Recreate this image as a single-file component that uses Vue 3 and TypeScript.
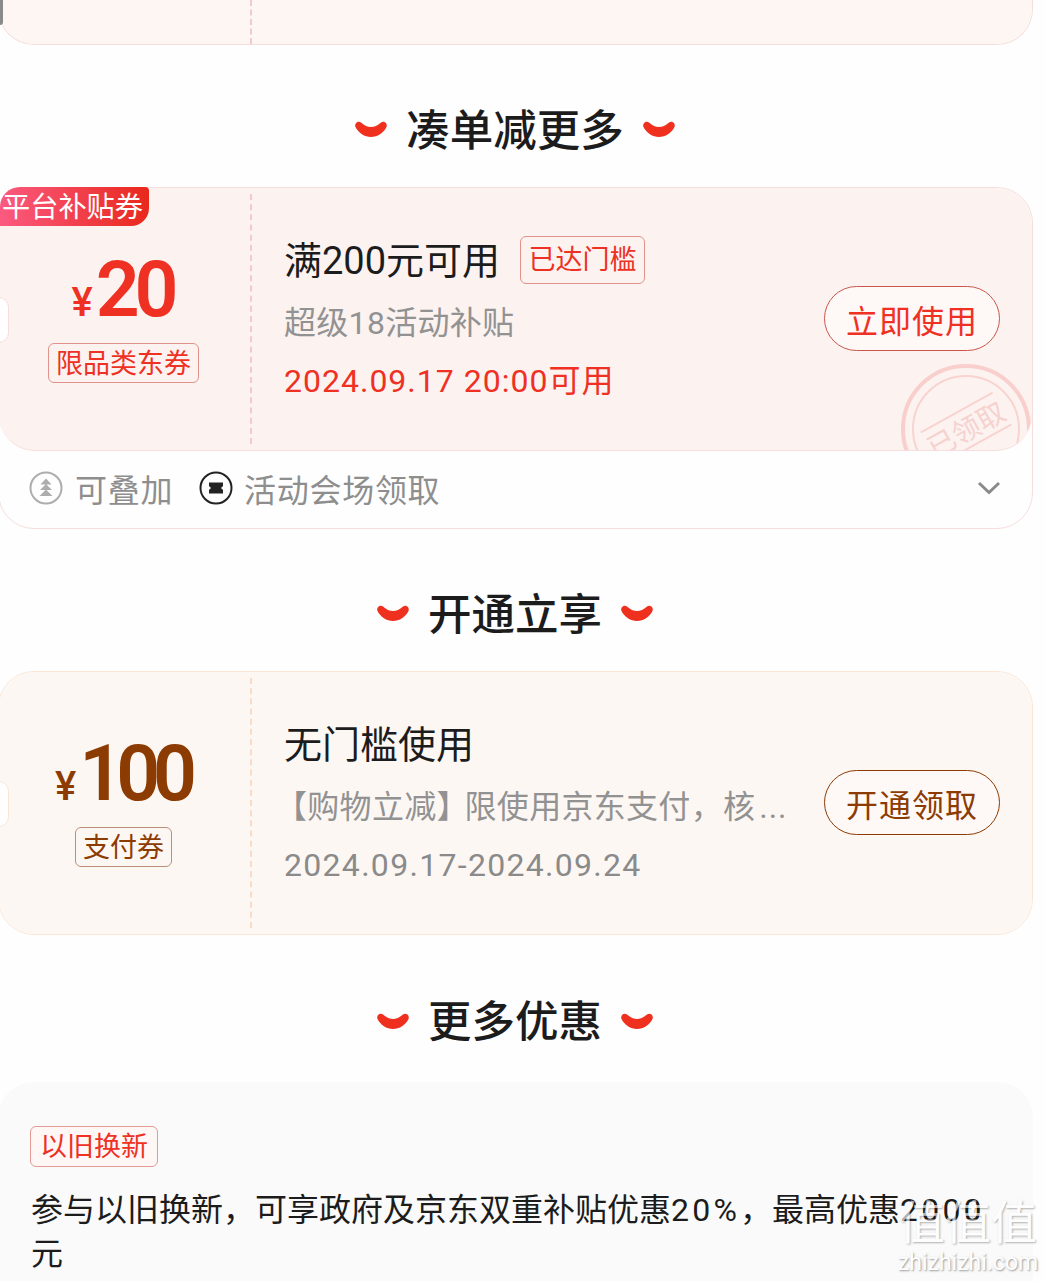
<script setup lang="ts">
/**
 * Coupon list page: grouped tickets with section headings
 */
const smilePath =
	"M1 7C-.5 3.5 3.5 0 6.5 2.5 10 5.5 13 7 16.5 7 20 7 23 5.5 26.5 2.5 29.5 0 33.5 3.5 32 7 29 13 23 17 16.5 17 10 17 4 13 1 7Z";
</script>

<template>
	<div class="page">
		<div class="card top-card">
			<div class="ticket ticket-red top-ticket">
				<div class="ticket-left"></div>
				<div class="divider"></div>
			</div>
		</div>

		<h2 class="heading">
			<svg class="smile" viewBox="0 0 33 18"><path :d="smilePath" /></svg>
			<span>凑单减更多</span>
			<svg class="smile" viewBox="0 0 33 18"><path :d="smilePath" /></svg>
		</h2>

		<div class="card">
			<div class="ticket ticket-red ticket-lined">
				<div class="stamp-clip">
					<svg class="stamp" viewBox="0 0 130 130">
						<circle cx="65" cy="65" r="63" class="ring-outer" />
						<circle cx="65" cy="65" r="53" class="ring-inner" />
						<g transform="rotate(-29 65 65)">
							<line x1="24" y1="46" x2="106" y2="46" class="ring-inner" />
							<line x1="20" y1="83" x2="107" y2="83" class="ring-inner" />
							<text x="65" y="76" text-anchor="middle" class="stamp-text">已领取</text>
						</g>
					</svg>
				</div>
				<div class="badge">平台补贴券</div>
				<div class="notch"></div>
				<div class="ticket-left">
					<div class="amount">
						<span class="yen">¥</span><span class="num">20</span>
					</div>
					<span class="kind">限品类东券</span>
				</div>
				<div class="divider"></div>
				<div class="info">
					<div class="info-row title">
						满200元可用
						<span class="reached">已达门槛</span>
					</div>
					<div class="info-row desc">超级18活动补贴</div>
					<div class="info-row date date-red">2024.09.17 20:00可用</div>
				</div>
				<button class="action" type="button">立即使用</button>
			</div>
			<div class="card-foot">
				<svg class="foot-icon" viewBox="0 0 34 34">
					<circle cx="17" cy="17" r="15.5" fill="none" stroke="#adadad" stroke-width="2" />
					<path d="M17 7.5l5.5 6h-11zM17 13l6 6H11zM17 18.5l6.5 6.5h-13z" fill="#adadad" />
				</svg>
				<span class="foot-text">可叠加</span>
				<svg class="foot-icon foot-icon-second" viewBox="0 0 34 34">
					<circle cx="17" cy="17" r="15.5" fill="none" stroke="#222" stroke-width="2" />
					<path d="M10 11.5h14v3.5l-2 2 2 2v3.5H10V19l2-2-2-2z" fill="#222" />
				</svg>
				<span class="foot-text">活动会场领取</span>
				<svg class="chevron" viewBox="0 0 24 14">
					<path d="M2 2l10 9.5L22 2" fill="none" stroke="#8a8a8a" stroke-width="3" />
				</svg>
			</div>
		</div>

		<h2 class="heading">
			<svg class="smile" viewBox="0 0 33 18"><path :d="smilePath" /></svg>
			<span>开通立享</span>
			<svg class="smile" viewBox="0 0 33 18"><path :d="smilePath" /></svg>
		</h2>

		<div class="card card-brown">
			<div class="ticket ticket-brown">
				<div class="notch"></div>
				<div class="ticket-left">
					<div class="amount">
						<span class="yen">¥</span><span class="num num-long">100</span>
					</div>
					<span class="kind">支付券</span>
				</div>
				<div class="divider"></div>
				<div class="info">
					<div class="info-row title">无门槛使用</div>
					<div class="info-row desc desc-cut"><span class="open-br">【</span>购物立减<span class="close-br">】</span>限使用京东支付，核<span class="dots">...</span></div>
					<div class="info-row date date-gray">2024.09.17-2024.09.24</div>
				</div>
				<button class="action" type="button">开通领取</button>
			</div>
		</div>

		<h2 class="heading heading-last">
			<svg class="smile" viewBox="0 0 33 18"><path :d="smilePath" /></svg>
			<span>更多优惠</span>
			<svg class="smile" viewBox="0 0 33 18"><path :d="smilePath" /></svg>
		</h2>

		<div class="more">
			<span class="more-tag">以旧换新</span>
			<p class="more-text">参与以旧换新，可享政府及京东双重补贴优惠<span class="digits">20%</span>，最高优惠<span class="digits">2000</span>元</p>
		</div>

		<div class="scroll-mark"></div>

		<div class="watermark">
			<div class="wm-logo">值值值</div>
			<div class="wm-url">zhizhizhi.com</div>
		</div>
	</div>
</template>

<style scoped>
.page {
	position: relative;
	width: 1046px;
	height: 1281px;
	overflow: hidden;
	background: #fefefe;
	color: #1c1c1c;
	font-family: Roboto, "Noto Sans CJK SC", sans-serif;
}

.scroll-mark {
	position: absolute;
	left: 0;
	top: 0;
	width: 3px;
	height: 25px;
	background: #8a8a8a;
	border-radius: 0 0 3px 0;
}

.card {
	width: 1035px;
	margin-left: -2px;
	box-sizing: border-box;
	background: #fefefe;
	border: 1px solid #f5dedb;
	border-radius: 36px;
}

.top-card {
	border-top: none;
	border-radius: 0 0 36px 36px;
}

.card-brown {
	border-color: #fbe6d6;
}

.ticket {
	position: relative;
	display: flex;
	height: 263px;
	box-sizing: border-box;
	border-radius: 36px;
}

.ticket-red {
	background: #fcf3f1;
	--accent: #ee3123;
	--accent-line: #c9574c;
	--tag-line: #e0938b;
	--dash: #f3c9cb;
}

.ticket-brown {
	background: #fdf7f3;
	--accent: #8c3c03;
	--accent-line: #8c3c03;
	--tag-line: #b9917a;
	--dash: #f8dcc8;
	height: 262px;
}

.top-ticket {
	height: 44px;
	background: #fdf6f3;
	border-radius: 0 0 36px 36px;
}

.top-ticket .divider {
	margin: 0;
}

.ticket-lined {
	border-bottom: 1px solid #f5dedb;
}

.heading {
	display: flex;
	align-items: center;
	justify-content: center;
	gap: 18px;
	box-sizing: border-box;
	height: 142px;
	margin: 0;
	padding: 22px 16px 0 0;
	font-size: 43.5px;
	font-weight: 500;
	color: #1c1c1c;
}

.heading-last {
	height: 147px;
	padding-bottom: 2px;
}

.smile {
	width: 34px;
	height: 18px;
	margin-top: 4px;
	fill: #f0301f;
}

.badge {
	position: absolute;
	left: 1px;
	top: -1px;
	width: 149px;
	height: 39px;
	box-sizing: border-box;
	padding-left: 2px;
	border-radius: 20px 4px 18px 0;
	background: linear-gradient(90deg, #fb5a80, #e9281c);
	color: #fff;
	font-size: 28.2px;
	line-height: 42px;
	white-space: nowrap;
}

.notch {
	position: absolute;
	left: -2px;
	top: 109px;
	width: 12px;
	height: 46px;
	box-sizing: border-box;
	background: #fefefe;
	border: 1px solid #f5dedb;
	border-radius: 0 10px 10px 0;
}

.ticket-brown .notch {
	border-color: #fbe6d6;
}

.ticket-left {
	display: flex;
	flex-direction: column;
	align-items: center;
	flex: none;
	width: 251px;
	padding: 60px 2px 0 0;
	box-sizing: border-box;
}

.amount {
	display: flex;
	align-items: baseline;
	height: 84px;
	margin: 0 0 11px -2px;
	line-height: 84px;
	color: var(--accent);
}

.yen {
	font-size: 40px;
	font-weight: 500;
	margin-right: 3px;
}

.num {
	font-size: 77px;
	font-weight: 600;
	letter-spacing: -5px;
}

.num-long {
	letter-spacing: -7px;
}

.kind {
	display: block;
	height: 40px;
	box-sizing: border-box;
	padding: 0 7px;
	border: 1px solid var(--tag-line);
	border-radius: 6px;
	color: var(--accent);
	font-size: 27px;
	line-height: 40px;
	white-space: nowrap;
}

.divider {
	flex: none;
	margin: 6px 0;
	border-left: 2px dashed var(--dash);
}

.info {
	flex: 1;
	min-width: 0;
	padding: 43px 0 0 32px;
}

.info-row {
	display: flex;
	align-items: center;
	height: 60px;
	font-size: 32px;
	line-height: 60px;
	white-space: nowrap;
}

.title {
	font-size: 38px;
	color: #1c1c1c;
}

.reached {
	margin: -2px 0 0 20px;
	height: 48px;
	box-sizing: border-box;
	padding: 0 7.5px;
	border: 1px solid var(--tag-line);
	border-radius: 6px;
	color: var(--accent);
	font-size: 27px;
	line-height: 46px;
}

.desc {
	margin-top: 2px;
	color: #929292;
	letter-spacing: 0.3px;
}

.desc-cut {
	display: block;
}

.open-br {
	margin-left: -9px;
}

.close-br {
	letter-spacing: -4px;
}

.dots {
	margin-left: 4px;
	letter-spacing: 1px;
}

.date {
	margin-top: -2px;
	color: #8a8a8a;
	letter-spacing: 1px;
}

.date-gray {
	letter-spacing: 1.3px;
}

.date-red {
	color: var(--accent);
}

.action {
	flex: none;
	align-self: center;
	width: 176px;
	height: 65px;
	margin: -1px 32px 0 0;
	padding: 0;
	background: #fef8f7;
	border: 1px solid var(--accent-line);
	border-radius: 33px;
	color: var(--accent);
	font-family: inherit;
	font-size: 32px;
	letter-spacing: 1px;
}

.stamp-clip {
	position: absolute;
	inset: 0;
	overflow: hidden;
	border-radius: 36px;
	pointer-events: none;
}

.stamp {
	position: absolute;
	left: 902px;
	top: 176px;
	width: 130px;
	height: 130px;
}

.ring-outer {
	fill: none;
	stroke: #f8cfcc;
	stroke-width: 4;
}

.ring-inner {
	fill: none;
	stroke: #f8d3d0;
	stroke-width: 2;
}

.stamp-text {
	fill: #f6d2cf;
	font-size: 28px;
}

.card-foot {
	display: flex;
	align-items: center;
	height: 77px;
	box-sizing: border-box;
	padding: 0 31px 3px 30px;
	color: #8e8e8e;
	font-size: 32px;
}

.foot-icon {
	flex: none;
	width: 34px;
	height: 34px;
}

.foot-icon-second {
	margin: 0 -1px 0 26px;
}

.foot-text {
	margin-left: 12px;
	letter-spacing: 0.7px;
	white-space: nowrap;
}

.chevron {
	width: 24px;
	height: 14px;
	margin-left: auto;
}

.more {
	width: 1035px;
	height: 260px;
	margin-left: -2px;
	box-sizing: border-box;
	padding: 44px 32px 0 32px;
	background: #fafafa;
	border-radius: 36px 36px 0 0;
}

.more-tag {
	display: inline-block;
	height: 41px;
	box-sizing: border-box;
	padding: 0 9px;
	background: #fef7f6;
	border: 1px solid #e39a92;
	border-radius: 6px;
	color: #ee3123;
	font-size: 27px;
	line-height: 41px;
}

.more-text {
	margin: 21px 0 0 1px;
	width: 970px;
	font-size: 32px;
	line-height: 44px;
	color: #1c1c1c;
}

.digits {
	letter-spacing: 3.2px;
}

.watermark {
	position: absolute;
	left: 897px;
	top: 1196px;
	width: 142px;
	color: #fff;
	text-align: center;
	text-shadow: 1px 1px 2px rgba(0, 0, 0, 0.45);
	pointer-events: none;
}

.wm-logo {
	height: 54px;
	font-size: 46px;
	line-height: 54px;
	white-space: nowrap;
	opacity: 0.65;
}

.wm-url {
	font-size: 23px;
	line-height: 26px;
	opacity: 0.85;
}
</style>
